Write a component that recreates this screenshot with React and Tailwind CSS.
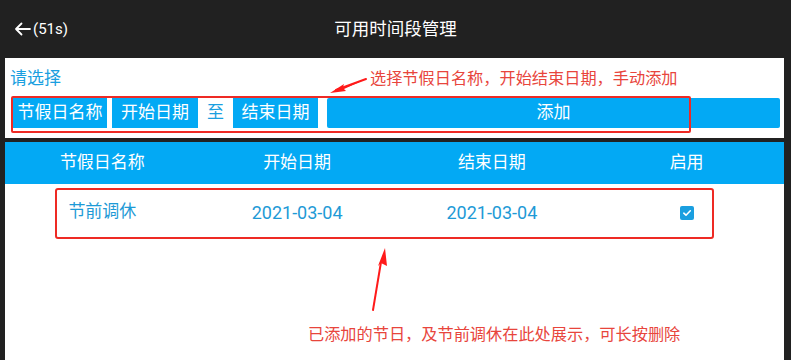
import React from "react";

// ─── Data ─────────────────────────────────────────────────────────────────────

const COLUMNS = ["节假日名称", "开始日期", "结束日期", "启用"];

const ROWS = [
  { name: "节前调休", start: "2021-03-04", end: "2021-03-04", enabled: true },
];

const FONT = { fontFamily: "Roboto, 'Noto Sans CJK SC', sans-serif" };

// ─── Small helpers ────────────────────────────────────────────────────────────

function Chip({ children, className = "" }) {
  return (
    <div className={`h-[30px] flex items-center justify-center bg-[#03a9f4] text-white text-[17px] ${className}`}>
      {children}
    </div>
  );
}

function Checkbox({ checked }) {
  return (
    <span className="inline-flex w-[14px] h-[14px] rounded-[2px] bg-[#1a9fe0] items-center justify-center">
      {checked && (
        <svg width="10" height="10" viewBox="0 0 10 10" fill="none">
          <path d="M1.8 5.2 L4 7.2 L8.3 2.8" stroke="white" strokeWidth="1.6" strokeLinecap="round" strokeLinejoin="round" />
        </svg>
      )}
    </span>
  );
}

// ─── Main page ────────────────────────────────────────────────────────────────

export default function App() {
  return (
    <div className="relative w-[791px] h-[360px] bg-[#212121] overflow-hidden" style={FONT}>
      {/* Header */}
      <div className="h-[58px] grid grid-cols-[1fr_auto_1fr] items-center text-white">
        <div className="flex items-center pl-[14px] gap-[2px]">
          <svg width="17" height="14" viewBox="0 0 17 14" fill="none">
            <path d="M16 7 H2 M7.5 1.5 L2 7 L7.5 12.5" stroke="white" strokeWidth="1.8" strokeLinecap="round" strokeLinejoin="round" />
          </svg>
          <span className="text-[15px]">(51s)</span>
        </div>
        <div className="text-[17.5px]">可用时间段管理</div>
        <div />
      </div>

      {/* Selection panel */}
      <div className="ml-[5px] mr-[7px] h-[80px] bg-white pl-[5px] pt-[10px]">
        <div className="text-[17px] leading-[20px] text-[#1a9fe0]">请选择</div>
        <div className="flex items-center mt-[10px] pl-[3px] pr-[4px]">
          <Chip className="w-[94px]">节假日名称</Chip>
          <Chip className="w-[86px] ml-[5px]">开始日期</Chip>
          <div className="w-[35px] h-[30px] flex items-center justify-center text-[17px] text-[#1a9fe0]">至</div>
          <Chip className="w-[85px]">结束日期</Chip>
          <Chip className="flex-1 ml-[9px] rounded-[2px]">添加</Chip>
        </div>
      </div>

      {/* Table */}
      <div className="ml-[5px] mr-[7px] mt-[4px] h-[218px] bg-white">
        <div className="h-[42px] grid grid-cols-4 items-center bg-[#03a9f4] text-white text-[17px]">
          {COLUMNS.map((c) => (
            <div key={c} className="text-center">{c}</div>
          ))}
        </div>
        {ROWS.map((r) => (
          <div key={r.name} className="h-[56px] grid grid-cols-4 items-center text-[17px] text-[#1e9ad6]">
            <div className="text-center">{r.name}</div>
            <div className="text-center text-[18px]">{r.start}</div>
            <div className="text-center text-[18px]">{r.end}</div>
            <div className="flex justify-center pt-[2px]">
              <Checkbox checked={r.enabled} />
            </div>
          </div>
        ))}
      </div>

      {/* Annotations */}
      <div className="absolute left-[11px] top-[96px] w-[680px] h-[37px] border-2 border-[#ee2a24] rounded-[2px]" />
      <div className="absolute left-[55px] top-[188px] w-[659px] h-[51px] border-2 border-[#ee2a24] rounded-[3px]" />

      <div className="absolute left-[370px] top-[69px] text-[16.2px] leading-[20px] text-[#e8453c]">
        选择节假日名称，开始结束日期，手动添加
      </div>
      <div className="absolute left-[308px] top-[325px] text-[16.2px] leading-[20px] text-[#e8453c]">
        已添加的节日，及节前调休在此处展示，可长按删除
      </div>

      <svg className="absolute left-0 top-0" width="791" height="360" viewBox="0 0 791 360" fill="none">
        <path d="M366 79 L343 87 L344 84 L330 93 L346 91 L344 89 Z" fill="#ff1a1a" />
        <path d="M366 79 L336 90" stroke="#ff1a1a" strokeWidth="2" strokeLinecap="round" />
        <path d="M373 310 L381 262" stroke="#ff1a1a" strokeWidth="2" strokeLinecap="round" />
        <path d="M385 248 L378 266 L381 263 L387 266 Z" fill="#ff1a1a" />
      </svg>
    </div>
  );
}
